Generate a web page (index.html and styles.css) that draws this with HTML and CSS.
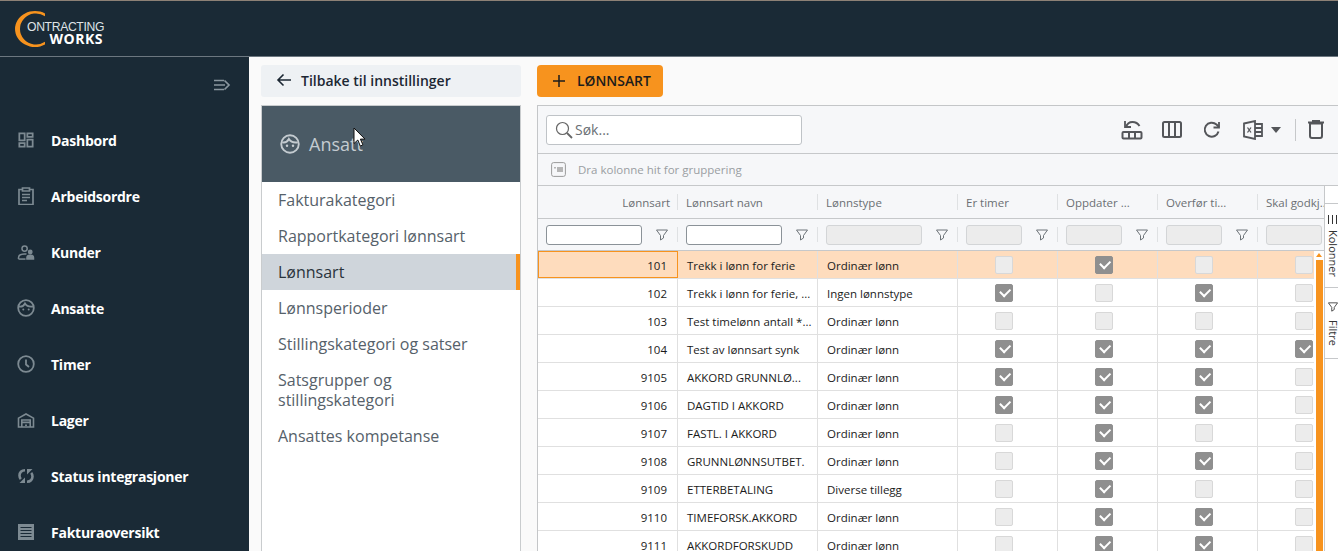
FILE: index.html
```html
<!DOCTYPE html>
<html lang="no">
<head>
<meta charset="utf-8">
<title>Lønnsart</title>
<link rel="stylesheet" href="styles.css">
</head>
<body>
<header class="topbar">
  <div class="logo">
    <svg class="logo-c" width="31" height="36" viewBox="0 0 31 36"><path d="M30 2.400A20 18 0 1 0 30 33.600V30.800A16 15.500 0 1 1 30 5.200Z" fill="#f7931e"/></svg>
    <div class="logo-text"><span class="logo-top">ONTRACTING</span><span class="logo-bottom">WORKS</span></div>
  </div>
</header>
<div class="app">
  <nav class="sidebar">
    <div class="collapse"><svg width="18" height="14" viewBox="0 0 18 14" fill="none" stroke="#8b979f" stroke-width="1.700"><path d="M1 2.500h10M1 7h11M1 11.500h10M11.500 2.500 16 7l-4.500 4.500"/></svg></div>
    <a class="nav-item"><svg width="18" height="16" viewBox="0 0 18 18" fill="none" stroke="#7d8a92" stroke-width="2"><path d="M1.500 1.500h6v8h-6zM10.500 1.500h6v4h-6zM10.500 8.500h6v8h-6zM1.500 12.500h6v4h-6z"/></svg><span>Dashbord</span></a>
    <a class="nav-item"><svg width="18" height="18" viewBox="0 0 18 18" fill="none" stroke="#7d8a92" stroke-width="1.700"><path d="M5.500 2.500H2v15h14v-15h-3.500M5.500 1h7v3h-7zM5 7.500h8M5 10.500h8M5 13.500h5"/></svg><span>Arbeidsordre</span></a>
    <a class="nav-item"><svg width="18" height="15" viewBox="0 0 18 16" fill="none" stroke="#7d8a92" stroke-width="1.600"><circle cx="7.500" cy="3.800" r="2.800"/><path d="M1 15v-1.500c0-2.500 3-4 6.500-4 .8 0 1.500.1 2 .2"/><path d="M1 15h7.500"/><circle cx="13.500" cy="7.500" r="1.800" fill="#7d8a92"/><path d="M10 15v-1.500c0-1.500 1.500-2.500 3.500-2.500s3.500 1 3.500 2.500V15z" fill="#7d8a92"/></svg><span>Kunder</span></a>
    <a class="nav-item"><svg width="18" height="18" viewBox="0 0 18 18" fill="none" stroke="#7d8a92" stroke-width="1.800"><circle cx="9" cy="9" r="7.800"/><path d="M2 7.500c3 .5 5-1 6-3 1.500 2.500 4.500 3.500 8 3"/><circle cx="6.300" cy="10.500" r="1" fill="#7d8a92" stroke="none"/><circle cx="11.700" cy="10.500" r="1" fill="#7d8a92" stroke="none"/></svg><span>Ansatte</span></a>
    <a class="nav-item"><svg width="18" height="18" viewBox="0 0 18 18" fill="none" stroke="#7d8a92" stroke-width="1.800"><circle cx="9" cy="9" r="7.800"/><path d="M9 4.500V9.500l3 2.500"/></svg><span>Timer</span></a>
    <a class="nav-item"><svg width="18" height="15" viewBox="0 0 18 16" fill="none" stroke="#7d8a92" stroke-width="1.700"><path d="M1 15V5.500L9 1l8 4.500V15zM4.500 15V7.500h9V15M4.500 10h9M8 13h2"/></svg><span>Lager</span></a>
    <a class="nav-item"><svg width="18" height="16" viewBox="0 0 18 16" fill="none" stroke="#7d8a92" stroke-width="2.600"><path d="M8 2.300C4.500 2.300 2.500 4.500 2.500 7.500c0 1.500.5 2.700 1.300 3.600"/><path d="M10 13.700c3.500 0 5.500-2.200 5.500-5.200 0-1.500-.5-2.700-1.300-3.600"/><path d="M8 9.500V15H2.500z" fill="#7d8a92" stroke="none"/><path d="M10 6.500V1h5.500z" fill="#7d8a92" stroke="none"/></svg><span>Status integrasjoner</span></a>
    <a class="nav-item"><svg width="16" height="18" viewBox="0 0 16 18"><path d="M0 1h16v16H0z" fill="#7d8a92"/><path d="M2.500 4.500h11M2.500 7.500h11M2.500 10.500h11M2.500 13.500h11" stroke="#1a2a36" stroke-width="1.200"/></svg><span>Fakturaoversikt</span></a>
  </nav>
  <main class="content">
    <aside class="settings">
      <div class="back"><svg width="16" height="14" viewBox="0 0 16 14" fill="none" stroke="#1c2733" stroke-width="1.600"><path d="M15 7H2M7.500 1.500 2 7l5.500 5.500"/></svg><span>Tilbake til innstillinger</span></div>
      <div class="card">
        <div class="card-head">
          <svg width="20" height="20" viewBox="0 0 18 18" fill="none" stroke="#c4cbd0" stroke-width="1.700"><circle cx="9" cy="9" r="7.900"/><path d="M2 7.500c3 .5 5-1 6-3 1.500 2.500 4.500 3.500 8 3"/><circle cx="6.300" cy="10.500" r="1.100" fill="#c4cbd0" stroke="none"/><circle cx="11.700" cy="10.500" r="1.100" fill="#c4cbd0" stroke="none"/></svg>
          <span>Ansatt</span>
          <svg class="cursor" width="13" height="21" viewBox="0 0 13 21"><path d="M1 1v15.500l3.800-3.500 2.500 6 2.600-1.100-2.500-5.800H12z" fill="#fff" stroke="#111" stroke-width="1"/></svg>
        </div>
        <ul class="menu">
          <li>Fakturakategori</li>
          <li>Rapportkategori lønnsart</li>
          <li class="active">Lønnsart</li>
          <li>Lønnsperioder</li>
          <li>Stillingskategori og satser</li>
          <li class="two">Satsgrupper og stillingskategori</li>
          <li>Ansattes kompetanse</li>
        </ul>
      </div>
    </aside>
    <section class="main">
      <button class="add"><svg width="12" height="12" viewBox="0 0 12 12" stroke="#1c1c1c" stroke-width="1.500"><path d="M6 0v12M0 6h12"/></svg><span>LØNNSART</span></button>
      <div class="grid">
        <div class="toolbar">
          <div class="search"><svg width="18" height="18" viewBox="0 0 18 18" fill="none" stroke="#666" stroke-width="1.200"><circle cx="7.500" cy="7.500" r="6"/><path d="m12 12 5 5" stroke-width="1.800"/></svg><span>Søk...</span></div>
          <div class="tools">
            <svg class="tool" width="22" height="20" viewBox="0 0 22 20" fill="none" stroke="#54565a" stroke-width="2"><path d="M5 7c1-3 3.500-5 6.500-5 3 0 5.500 1.500 7 4"/><path d="M4 1v6h6" stroke-width="1.800"/><rect x="1.500" y="12" width="19" height="6.500" rx="1"/><path d="M8 12v6M14 12v6"/></svg>
            <svg class="tool" width="20" height="17" viewBox="0 0 20 17" fill="none" stroke="#54565a" stroke-width="2"><rect x="1" y="1" width="18" height="15" rx="1.500"/><path d="M7 1v15M13 1v15"/></svg>
            <svg class="tool" width="18" height="18" viewBox="0 0 18 18" fill="none" stroke="#54565a" stroke-width="2"><path d="M15.500 10.500A7 7 0 1 1 13.500 3.500L16 6"/><path d="M16 1v5.500h-5.500" stroke-width="1.800"/></svg>
            <span class="excel">
              <svg width="20" height="20" viewBox="0 0 20 20" fill="none" stroke="#54565a" stroke-width="1.800"><path d="M1 3.500 12 1v18L1 16.500z"/><path d="M12 4h7v12h-7M12 8h7M12 12h7"/><path d="m4.500 7.500 3.500 5M8 7.500l-3.500 5" stroke-width="1.300"/></svg>
              <i class="caret"></i>
            </span>
            <span class="sep"></span>
            <svg class="tool" width="16" height="19" viewBox="0 0 16 19" fill="none" stroke="#54565a" stroke-width="2"><path d="M2 3.500h12V16a2 2 0 0 1-2 2H4a2 2 0 0 1-2-2zM0 2.500h16"/><path d="M5 2V1h6v1"/></svg>
          </div>
        </div>
        <div class="groupbar">
          <svg width="15" height="15" viewBox="0 0 15 15" fill="none"><rect x=".6" y=".6" width="13.800" height="13.800" rx="2" stroke="#9a9a9a"/><path d="M6 5h6v5H6zM3 5h2v1.500H3z" fill="#b5b5b5"/></svg>
          <span>Dra kolonne hit for gruppering</span>
        </div>
        <div class="row head">
          <div class="cell num">Lønnsart</div>
          <div class="cell wide">Lønnsart navn</div>
          <div class="cell wide">Lønnstype</div>
          <div class="cell std">Er timer</div>
          <div class="cell std">Oppdater ...</div>
          <div class="cell std">Overfør ti...</div>
          <div class="cell std">Skal godkj...</div>
        </div>
        <div class="row filter">
          <div class="cell num"><span class="field on"></span><svg class="funnel" width="12" height="12" viewBox="0 0 12 12" fill="none" stroke="#6d7378"><path d="M.5 1h11L7.500 6.500V9L4.500 11V6.500z"/></svg></div>
          <div class="cell wide"><span class="field on"></span><svg class="funnel" width="12" height="12" viewBox="0 0 12 12" fill="none" stroke="#6d7378"><path d="M.5 1h11L7.500 6.500V9L4.500 11V6.500z"/></svg></div>
          <div class="cell wide"><span class="field"></span><svg class="funnel" width="12" height="12" viewBox="0 0 12 12" fill="none" stroke="#6d7378"><path d="M.5 1h11L7.500 6.500V9L4.500 11V6.500z"/></svg></div>
          <div class="cell std"><span class="field"></span><svg class="funnel" width="12" height="12" viewBox="0 0 12 12" fill="none" stroke="#6d7378"><path d="M.5 1h11L7.500 6.500V9L4.500 11V6.500z"/></svg></div>
          <div class="cell std"><span class="field"></span><svg class="funnel" width="12" height="12" viewBox="0 0 12 12" fill="none" stroke="#6d7378"><path d="M.5 1h11L7.500 6.500V9L4.500 11V6.500z"/></svg></div>
          <div class="cell std"><span class="field"></span><svg class="funnel" width="12" height="12" viewBox="0 0 12 12" fill="none" stroke="#6d7378"><path d="M.5 1h11L7.500 6.500V9L4.500 11V6.500z"/></svg></div>
          <div class="cell std"><span class="field"></span></div>
        </div>
        <div class="row data selected"><div class="cell num focus">101</div><div class="cell wide">Trekk i lønn for ferie</div><div class="cell wide">Ordinær lønn</div><div class="cell std"><i class="box"></i></div><div class="cell std"><i class="box yes"></i></div><div class="cell std"><i class="box"></i></div><div class="cell std"><i class="box"></i></div></div>
        <div class="row data"><div class="cell num">102</div><div class="cell wide">Trekk i lønn for ferie, ...</div><div class="cell wide">Ingen lønnstype</div><div class="cell std"><i class="box yes"></i></div><div class="cell std"><i class="box"></i></div><div class="cell std"><i class="box yes"></i></div><div class="cell std"><i class="box"></i></div></div>
        <div class="row data"><div class="cell num">103</div><div class="cell wide">Test timelønn antall *...</div><div class="cell wide">Ordinær lønn</div><div class="cell std"><i class="box"></i></div><div class="cell std"><i class="box"></i></div><div class="cell std"><i class="box"></i></div><div class="cell std"><i class="box"></i></div></div>
        <div class="row data"><div class="cell num">104</div><div class="cell wide">Test av lønnsart synk</div><div class="cell wide">Ordinær lønn</div><div class="cell std"><i class="box yes"></i></div><div class="cell std"><i class="box yes"></i></div><div class="cell std"><i class="box yes"></i></div><div class="cell std"><i class="box yes"></i></div></div>
        <div class="row data"><div class="cell num">9105</div><div class="cell wide">AKKORD GRUNNLØ...</div><div class="cell wide">Ordinær lønn</div><div class="cell std"><i class="box yes"></i></div><div class="cell std"><i class="box yes"></i></div><div class="cell std"><i class="box yes"></i></div><div class="cell std"><i class="box"></i></div></div>
        <div class="row data"><div class="cell num">9106</div><div class="cell wide">DAGTID I AKKORD</div><div class="cell wide">Ordinær lønn</div><div class="cell std"><i class="box yes"></i></div><div class="cell std"><i class="box yes"></i></div><div class="cell std"><i class="box yes"></i></div><div class="cell std"><i class="box"></i></div></div>
        <div class="row data"><div class="cell num">9107</div><div class="cell wide">FASTL. I AKKORD</div><div class="cell wide">Ordinær lønn</div><div class="cell std"><i class="box"></i></div><div class="cell std"><i class="box yes"></i></div><div class="cell std"><i class="box"></i></div><div class="cell std"><i class="box"></i></div></div>
        <div class="row data"><div class="cell num">9108</div><div class="cell wide">GRUNNLØNNSUTBET.</div><div class="cell wide">Ordinær lønn</div><div class="cell std"><i class="box"></i></div><div class="cell std"><i class="box yes"></i></div><div class="cell std"><i class="box yes"></i></div><div class="cell std"><i class="box"></i></div></div>
        <div class="row data"><div class="cell num">9109</div><div class="cell wide">ETTERBETALING</div><div class="cell wide">Diverse tillegg</div><div class="cell std"><i class="box"></i></div><div class="cell std"><i class="box yes"></i></div><div class="cell std"><i class="box"></i></div><div class="cell std"><i class="box"></i></div></div>
        <div class="row data"><div class="cell num">9110</div><div class="cell wide">TIMEFORSK.AKKORD</div><div class="cell wide">Ordinær lønn</div><div class="cell std"><i class="box"></i></div><div class="cell std"><i class="box yes"></i></div><div class="cell std"><i class="box yes"></i></div><div class="cell std"><i class="box"></i></div></div>
        <div class="row data"><div class="cell num">9111</div><div class="cell wide">AKKORDFORSKUDD</div><div class="cell wide">Ordinær lønn</div><div class="cell std"><i class="box"></i></div><div class="cell std"><i class="box yes"></i></div><div class="cell std"><i class="box yes"></i></div><div class="cell std"><i class="box"></i></div></div>
        <div class="scroll"><i class="scroll-up"></i><i class="scroll-thumb"></i></div>
        <div class="sidepanel">
          <div class="tab"><svg width="9" height="9" viewBox="0 0 9 9" stroke="#333"><path d="M.5 0v9M4.500 0v9M8.500 0v9"/></svg><span>Kolonner</span></div>
          <div class="tab tab-filter"><svg width="10" height="10" viewBox="0 0 12 12" fill="none" stroke="#333"><path d="M.5 1h11L7.500 6.500V9L4.500 11V6.500z"/></svg><span>Filtre</span></div>
        </div>
      </div>
    </section>
  </main>
</div>
</body>
</html>
```
FILE: styles.css
```css
* { box-sizing: border-box; }
html, body { margin: 0; height: 100%; }
body {
  font-family: "Open Sans", "Noto Sans", sans-serif;
  background: #fafafa;
  overflow: hidden;
  width: 1338px;
  height: 551px;
}
.topbar {
  height: 57px;
  background: #1a2a36;
  border-top: 1px solid #8d8176;
  border-bottom: 1px solid #6c7780;
  position: relative;
}
.logo { position: relative; padding: 10px 0 0 15px; }
.logo-c { display: block; }
.logo-text { position: absolute; left: 27px; top: 21px; width: 76px; color: #fff; line-height: 1; }
.logo-top { display: block; font-family: "Liberation Sans", sans-serif; font-size: 12.200px; letter-spacing: -.35px; color: #dfe3e6; line-height: 11px; }
.logo-bottom { display: block; font-family: "Open Sans", sans-serif; font-weight: 700; font-size: 14px; text-align: right; line-height: 11px; letter-spacing: .5px; }
.app { display: flex; height: 494px; }
.sidebar { width: 249px; background: #1a2a36; flex: none; overflow: hidden; }
.collapse { height: 55px; padding: 21px 18px 0 0; display: flex; justify-content: flex-end; align-items: flex-start; }
.nav-item { display: flex; align-items: center; height: 56px; padding-left: 17px; color: #fff; font-size: 14px; font-weight: 700; letter-spacing: -.25px; }
.nav-item svg { width: 18px; flex: none; margin-right: 16px; }
.content { flex: 1; min-width: 0; display: flex; padding: 8px 0 0 12px; overflow: hidden; }
.settings { width: 260px; flex: none; }
.back {
  height: 32px; background: #eef1f4; border-radius: 3px; display: flex; align-items: center;
  padding: 0 0 2px 15px; font-size: 14px; font-weight: 600; color: #1c2733;
}
.back svg { margin-right: 9px; }
.card { margin-top: 8px; border: 1px solid #c9ccce; background: #fff; height: 460px; }
.card-head {
  height: 76px; background: #4a5a65; display: flex; align-items: center; padding: 0 0 0 18px;
  color: #c4cbd0; font-size: 18px; position: relative;
}
.card-head span { margin-left: 9px; }
.cursor { position: absolute; left: 91px; top: 21px; }
.menu { list-style: none; margin: 0; padding: 0; color: #56616a; font-size: 16px; }
.menu li { height: 36px; padding-left: 16px; line-height: 36px; }
.menu li.active { background: #cfd5db; color: #2a333b; border-right: 4px solid #f7931e; }
.menu li.two { height: 56px; line-height: 20px; padding: 8px 40px 0 16px; }
.main { margin-left: 16px; flex: 1; min-width: 0; }
.add {
  display: flex; align-items: center; width: 126px; height: 32px; background: #f7931e; border: 0; border-radius: 4px;
  padding: 0 0 2px 16px; font: 600 13.900px "Open Sans", sans-serif; color: #1c1c1c;
}
.add svg { margin-right: 12px; margin-top: 2px; }
.grid {
  margin-top: 8px; width: 810px; border: 1px solid #c4c6c8; border-right: 0; background: #fff; position: relative;
  height: 460px; overflow: hidden;
}
.toolbar {
  height: 48px; background: #f6f7f9; border-bottom: 1px solid #c6c8ca; display: flex; align-items: center; padding: 0 0 0 8px;
}
.search {
  width: 256px; height: 30px; background: #fff; border: 1px solid #bfc3c7; border-radius: 3px;
  display: flex; align-items: center; padding-left: 8px; color: #6a6f74; font-size: 14px;
}
.search svg { margin-right: 2px; }
.tools { display: flex; align-items: center; margin-left: 319px; }
.tool { flex: none; }
.tools > .tool:nth-child(1) { margin-right: 19px; }
.tools > .tool:nth-child(2) { margin-right: 21px; }
.tools > .tool:nth-child(3) { margin-right: 22px; }
.excel { display: flex; align-items: center; width: 52px; }
.caret { width: 0; height: 0; margin-left: 8px; border: 5px solid transparent; border-top: 6px solid #54565a; border-bottom: 0; }
.sep { width: 1px; height: 22px; background: #c6c8ca; margin-right: 12px; }
.groupbar {
  height: 32px; background: #f6f7f9; border-bottom: 1px solid #c6c8ca; display: flex; align-items: center; padding-left: 13px;
  color: #9a9ea2; font-size: 11.500px;
}
.groupbar svg { margin-right: 12px; }
.row { display: flex; width: 820px; }
.cell { flex: none; display: flex; align-items: center; position: relative; font-size: 11.500px; color: #1b1b1b; overflow: hidden; }
.num { width: 140px; justify-content: flex-end; }
.wide { width: 140px; }
.std { width: 100px; }
.head { height: 33px; background: #f6f7f9; border-bottom: 1px solid #c6c8ca; }
.head .cell { color: #6b6f73; font-weight: 400; padding: 0 8px; white-space: nowrap; overflow: visible; }
.head .cell::after, .filter .cell::after {
  content: ""; position: absolute; right: 0; top: 8px; bottom: 8px; width: 1px; background: #dfe1e3;
}
.filter { height: 32px; background: #f6f7f9; border-bottom: 1px solid #c6c8ca; }
.filter .cell { padding: 0 8px; justify-content: flex-start; }
.field { width: 96px; height: 20px; border: 1px solid #d3d5d7; border-radius: 3px; background: #ececec; flex: none; }
.field.on { background: #fff; border-color: #8b9298; }
.std .field { width: 56px; }
.funnel { margin-left: 14px; flex: none; }
.data { height: 28px; border-bottom: 1px solid #e0e0e0; background: #fff; }
.data .cell { padding: 2px 9px 0; border-right: 1px solid #e0e0e0; white-space: nowrap; }
.data .std { justify-content: flex-start; padding: 0 0 0 37px; }
.data .std:last-child { border-right: 0; }
.data .num { padding-right: 10px; }
.selected { background: #fedcbd; }
.focus { outline: 1px solid #f7931e; outline-offset: -1px; }
.box { display: block; width: 18px; height: 18px; background: #ececec; border: 1px solid #d8d8d8; border-radius: 2px; position: relative; flex: none; }
.box.yes { background: #8f8f8f; border-color: #8f8f8f; }
.box.yes::after {
  content: ""; position: absolute; left: 3.500px; top: 3.500px; width: 8px; height: 4.500px;
  border-left: 2px solid #fff; border-bottom: 2px solid #fff; transform: rotate(-45deg);
}
.scroll { position: absolute; left: 776px; top: 145px; width: 10px; bottom: 0; background: #fff; display: flex; flex-direction: column; align-items: center; }
.scroll-up { width: 0; height: 0; margin: 2px 0 3px; border: 3px solid transparent; border-bottom: 4px solid #f7931e; border-top: 0; }
.scroll-thumb { width: 7px; flex: 1; background: #f7931e; }
.sidepanel { position: absolute; left: 786px; top: 80px; bottom: 0; width: 24px; background: #fff; border-left: 1px solid #c6c8ca; padding-top: 17px; }
.tab {
  display: flex; align-items: flex-end; gap: 6px; writing-mode: vertical-rl; border-top: 1px solid #c6c8ca;
  padding: 11px 14px 0 3px; font-size: 11px; line-height: 11px; color: #333; height: 84px; width: 100%;
}
.tab-filter { height: 72px; gap: 8px; padding-top: 14px; border-bottom: 1px solid #c6c8ca; }
```
